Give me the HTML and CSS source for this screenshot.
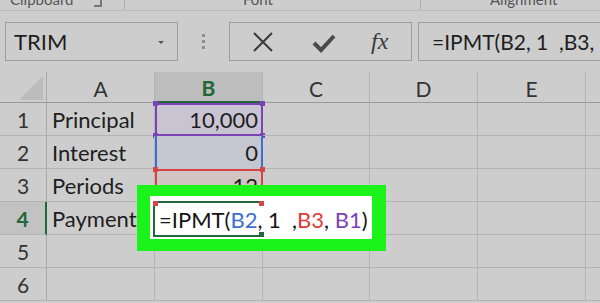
FILE: index.html
```html
<!DOCTYPE html>
<html lang="en">
  <head>
    <meta charset="UTF-8" />
    <title>IPMT formula</title>
    <link rel="stylesheet" href="styles.css">
  </head>
  <body>
    <div class="ribbon">
      <div class="group group-clipboard">
        <span class="group-label">Clipboard</span>
        <span class="launcher"></span>
      </div>
      <div class="group group-font"><span class="group-label">Font</span></div>
      <div class="group group-align"><span class="group-label">Alignment</span></div>
    </div>

    <div class="formula-bar">
      <div class="name-box">
        <span>TRIM</span>
        <span class="caret"></span>
      </div>
      <div class="grip"><i></i><i></i><i></i></div>
      <div class="fx-buttons">
        <svg class="btn-cancel" width="22" height="20" viewBox="0 0 22 20">
          <path d="M2 1 L20 19 M20 1 L2 19" stroke="#3b3b3b" stroke-width="2" fill="none" />
        </svg>
        <svg class="btn-enter" width="24" height="20" viewBox="0 0 24 20">
          <path d="M2 10 L9 17 L22 3" stroke="#4a4a4a" stroke-width="4" fill="none" />
        </svg>
        <span class="btn-fx">fx</span>
      </div>
      <div class="formula-input">=IPMT(B2, 1  ,B3, B1)</div>
    </div>

    <div class="sheet">
      <div class="corner"><span class="corner-tri"></span></div>
      <div class="col-head">A</div>
      <div class="col-head active">B</div>
      <div class="col-head">C</div>
      <div class="col-head">D</div>
      <div class="col-head">E</div>
      <div class="col-head last"></div>

      <div class="row-head">1</div>
      <div class="cell">Principal</div>
      <div class="cell num ref-purple">10,000
        <span class="handle purple tl"></span><span class="handle purple tr"></span>
        <span class="handle purple bl"></span><span class="handle purple br"></span>
      </div>
      <div class="cell"></div><div class="cell"></div><div class="cell"></div><div class="cell last"></div>

      <div class="row-head">2</div>
      <div class="cell">Interest</div>
      <div class="cell num ref-blue">0</div>
      <div class="cell"></div><div class="cell"></div><div class="cell"></div><div class="cell last"></div>

      <div class="row-head">3</div>
      <div class="cell">Periods</div>
      <div class="cell num ref-red">12
        <span class="handle red tl"></span><span class="handle red tr"></span>
      </div>
      <div class="cell"></div><div class="cell"></div><div class="cell"></div><div class="cell last"></div>

      <div class="row-head active">4</div>
      <div class="cell">Payment</div>
      <div class="cell"></div>
      <div class="cell"></div><div class="cell"></div><div class="cell"></div><div class="cell last"></div>

      <div class="row-head">5</div>
      <div class="cell"></div><div class="cell"></div>
      <div class="cell"></div><div class="cell"></div><div class="cell"></div><div class="cell last"></div>

      <div class="row-head">6</div>
      <div class="cell"></div><div class="cell"></div>
      <div class="cell"></div><div class="cell"></div><div class="cell"></div><div class="cell last"></div>
    </div>

    <!-- zoomed callout of the cell being edited -->
    <div class="callout">
      <div class="edit-cell">
        <span class="handle red tl"></span><span class="handle red tr"></span>
        <span class="handle green br"></span>
        <span class="edit-text">=IPMT(<b class="c-blue">B2</b>, 1  ,<b class="c-red">B3</b>, <b class="c-purple">B1</b>)</span><span class="cursor"></span>
      </div>
    </div>
  </body>
</html>
```

FILE: styles.css
```css
body {
  margin: 0;
  width: 600px;
  height: 303px;
  overflow: hidden;
  background-color: #cdcdcd;
  font-family: Lato, "Open Sans", sans-serif;
  color: #1e1e1e;
  position: relative;
}

/* ribbon group labels, cut off at the top */
.ribbon {
  display: flex;
  height: 10px;
  overflow: hidden;
  border-bottom: 1px solid #bababa;
}

.group {
  display: flex;
  align-items: flex-start;
  box-sizing: border-box;
}

.group-label {
  font-size: 15px;
  line-height: 15px;
  margin-top: -8px;
  color: #555;
}

.group-clipboard {
  width: 125px;
  padding-left: 10px;
  border-right: 1px solid #b0b0b0;
}

.launcher {
  width: 6px;
  height: 5px;
  margin-left: 20px;
  border-right: 2px solid #777;
  border-bottom: 2px solid #777;
}

.group-font {
  width: 296px;
  padding-left: 118px;
  border-right: 1px solid #b0b0b0;
}

.group-align {
  flex: 1;
  padding-left: 69px;
}

/* name box + formula bar */
.formula-bar {
  display: flex;
  align-items: stretch;
  height: 39px;
  margin-top: 11px;
}

.name-box {
  width: 173px;
  margin-left: 5px;
  box-sizing: border-box;
  border: 1px solid #9d9d9d;
  display: flex;
  align-items: center;
  justify-content: space-between;
  padding: 0 13px 0 8px;
  font-size: 22px;
}

.caret {
  width: 0;
  height: 0;
  border-left: 3px solid transparent;
  border-right: 3px solid transparent;
  border-top: 3px solid #555;
  margin-top: 2px;
}

.grip {
  width: 51px;
  display: flex;
  flex-direction: column;
  align-items: center;
  justify-content: center;
  gap: 3px;
}

.grip i {
  width: 3px;
  height: 3px;
  background-color: #8f8f8f;
}

.fx-buttons {
  width: 183px;
  box-sizing: border-box;
  border: 1px solid #9d9d9d;
  display: flex;
  align-items: center;
  padding-left: 22px;
}

.btn-cancel {
  margin-right: 38px;
}

.btn-enter {
  margin-right: 35px;
  margin-top: 2px;
}

.btn-fx {
  font-family: "Liberation Serif", serif;
  font-style: italic;
  font-size: 24px;
  color: #3a3a3a;
}

.formula-input {
  flex: 1;
  margin-left: 6px;
  border: 1px solid #9d9d9d;
  border-right: none;
  padding-left: 13px;
  display: flex;
  align-items: center;
  font-size: 21px;
  white-space: pre;
  overflow: hidden;
}

/* worksheet grid */
.sheet {
  display: grid;
  grid-template-columns: 47px 108px 108px 107px 108px 108px 14px;
  grid-template-rows: 31px repeat(6, 33px);
  margin-top: 11px;
}

.corner {
  border-right: 1px solid #a9a9a9;
  border-bottom: 1px solid #9a9a9a;
  display: flex;
  align-items: flex-end;
  justify-content: flex-end;
  padding: 0 3px 2px 0;
}

.corner-tri {
  width: 0;
  height: 0;
  border-left: 24px solid transparent;
  border-bottom: 24px solid #bcbcbc;
}

.col-head {
  display: flex;
  align-items: center;
  justify-content: center;
  font-size: 21px;
  color: #333;
  border-right: 1px solid #b4b4b4;
  border-bottom: 1px solid #9a9a9a;
  padding-top: 2px;
}

.col-head.active {
  background-color: #bdbdbd;
  color: #21673a;
  font-weight: bold;
  border-bottom: 2px solid #21673a;
}

.row-head {
  display: flex;
  align-items: center;
  justify-content: center;
  font-size: 21px;
  color: #333;
  border-right: 1px solid #a9a9a9;
  border-bottom: 1px solid #b4b4b4;
}

.row-head.active {
  background-color: #c2c2c2;
  color: #21673a;
  font-weight: bold;
  border-right: 2px solid #21673a;
}

.cell {
  position: relative;
  display: flex;
  align-items: center;
  padding: 0 5px;
  font-size: 22px;
  white-space: nowrap;
  border-right: 1px solid #b4b4b4;
  border-bottom: 1px solid #b4b4b4;
}

.cell.num {
  justify-content: flex-end;
}

.last {
  border-right: none;
}

/* referenced ranges */
.ref-purple {
  background-color: #c9c4d2;
  border: none;
  box-shadow: inset 2px 0 #7b43b6, inset -2px 0 #7b43b6, inset 0 2px #7b43b6, inset 0 -2px #7b43b6;
}

.ref-blue {
  background-color: #c4c7d0;
  border: none;
  box-shadow: inset 2px 0 #3f6ed3, inset -2px 0 #3f6ed3;
}

.ref-red {
  background-color: #d3c4c4;
  border: none;
  box-shadow: inset 2px 0 #d64545, inset -2px 0 #d64545, inset 0 2px #d64545;
}

.handle {
  position: absolute;
  width: 5px;
  height: 5px;
}

.handle.purple { background-color: #7b43b6; }
.handle.red { background-color: #d64545; }
.handle.green { background-color: #21673a; }

.handle.tl { left: -2px; top: -2px; }
.handle.tr { right: -2px; top: -2px; }
.handle.bl { left: -2px; bottom: -2px; }
.handle.br { right: -2px; bottom: -2px; }

/* green highlight box */
.callout {
  position: absolute;
  left: 137px;
  top: 185px;
  width: 249px;
  height: 66px;
  box-sizing: border-box;
  border-style: solid;
  border-color: #1bf31b;
  border-width: 11px 14px 12px 13px;
  background-color: #fff;
  padding: 5px 0 0 3px;
}

.edit-cell {
  position: relative;
  width: 109px;
  height: 36px;
  box-sizing: border-box;
  border: 2px solid #21673a;
  border-right: none;
  display: flex;
  align-items: center;
  padding-left: 4px;
}

.edit-text {
  font-size: 22px;
  white-space: pre;
  color: #151515;
}

.edit-text b {
  font-weight: normal;
}

.c-blue { color: #3f6ed3; }
.c-red { color: #e03c3c; }
.c-purple { color: #7b43b6; }

.cursor {
  width: 2px;
  height: 34px;
  margin-left: 3px;
  background-color: #222;
}
```
